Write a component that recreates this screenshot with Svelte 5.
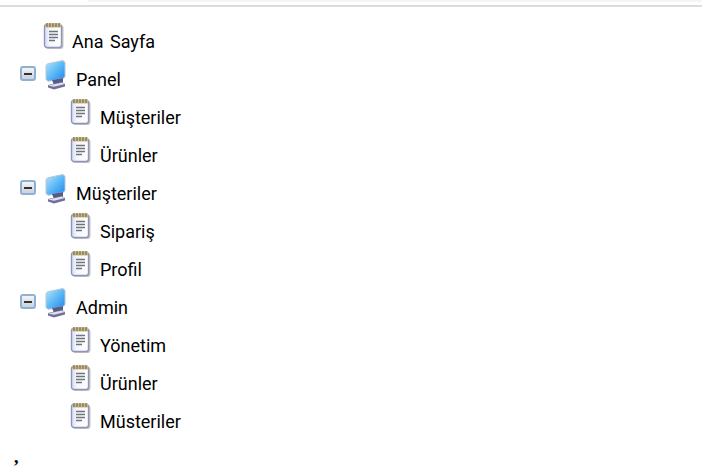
<script>
  const tree = [
    { label: "Ana Sayfa", type: "page" },
    {
      label: "Panel",
      type: "folder",
      children: ["Müşteriler", "Ürünler"]
    },
    {
      label: "Müşteriler",
      type: "folder",
      children: ["Sipariş", "Profil"]
    },
    {
      label: "Admin",
      type: "folder",
      children: ["Yönetim", "Ürünler", "Müsteriler"]
    }
  ];
</script>

{#snippet pageIcon()}
  <svg class="icon page" width="22" height="28" viewBox="0 0 22 28">
    <defs>
      <linearGradient id="pg" x1="0" x2="1" y1="0" y2="0">
        <stop offset="0" stop-color="#d3dbf2" />
        <stop offset="0.3" stop-color="#f6f7fb" />
        <stop offset="1" stop-color="#ffffff" />
      </linearGradient>
    </defs>
    <rect x="2.500" y="3" width="18" height="24" rx="3" fill="#c4c4c0" />
    <rect x="1.500" y="2.500" width="17" height="23" rx="2.500" fill="url(#pg)" stroke="#8d95bd" stroke-width="1.400" />
    <rect x="2.500" y="1.500" width="15.500" height="4" fill="#c6b98c" />
    <path d="M4 1v4M7 1v4M10 1v4M13 1v4M16 1v4" stroke="#857548" stroke-width="1.300" />
    <path d="M6 9.500h9M6 12.500h9M6 15.500h9M6 18.500h6" stroke="#6f737c" stroke-width="1.500" />
  </svg>
{/snippet}

{#snippet folderIcon()}
  <svg class="icon pc" width="24" height="30" viewBox="0 0 24 30">
    <defs>
      <linearGradient id="sc" x1="0" x2="1" y1="0" y2="1">
        <stop offset="0" stop-color="#b4e6fc" />
        <stop offset="0.55" stop-color="#55b4f5" />
        <stop offset="1" stop-color="#1f86e8" />
      </linearGradient>
    </defs>
    <path d="M2 6c0-1 1-2 2-2.300l14-3c1.500-.2 3 .8 3 2.300v13c0 1-1 2-2 2.200l-14 3c-1.500 0-3-1-3-2.500z" fill="url(#sc)" stroke="#b4c6dc" />
    <path d="M19 18v5l-9 2-2-5z" fill="#565c8a" />
    <path d="M4 25l14-3 3 2v2.500l-11 3-6-2z" fill="#726f9c" />
    <path d="M4 25.500l14-3 3 1.500-11 2.800z" fill="#e0e0ea" />
  </svg>
{/snippet}

{#snippet toggle()}
  <span class="toggle"><span class="minus"></span></span>
{/snippet}

<div class="page-wrap">
  <div class="strip"></div>
  <hr />
  <ul class="tree">
    {#each tree as node}
      {#if node.type === "page"}
        <li class="row root-page">
          {@render pageIcon()}
          <span class="label">{node.label}</span>
        </li>
      {:else}
        <li class="row folder">
          {@render toggle()}
          {@render folderIcon()}
          <span class="label">{node.label}</span>
        </li>
        {#each node.children as child}
          <li class="row child">
            {@render pageIcon()}
            <span class="label">{child}</span>
          </li>
        {/each}
      {/if}
    {/each}
  </ul>
  <p class="comma">,</p>
</div>

<style>
  :global(body) {
    margin: 0;
    background: #fff;
  }

  .page-wrap {
    width: 702px;
    height: 470px;
    overflow: hidden;
  }

  .strip {
    height: 2px;
    margin-left: 87px;
    background: #f5f5f5;
    border-bottom-left-radius: 3px;
  }

  hr {
    height: 0;
    margin: 3px 0 0;
    border: 0;
    border-top: 2px solid #dcdcdc;
  }

  .tree {
    list-style: none;
    margin: 15px 0 0;
    padding: 0;
    font-family: "Roboto", sans-serif;
    font-size: 18px;
    word-spacing: 2px;
    color: #000;
  }

  .row {
    display: flex;
    align-items: flex-start;
    height: 38px;
  }

  .root-page {
    padding-left: 43px;
  }

  .folder {
    padding-left: 20px;
  }

  .child {
    padding-left: 70px;
  }

  .label {
    line-height: 24px;
    margin-top: 8px;
    margin-left: 7px;
    white-space: nowrap;
  }

  .child .label {
    margin-left: 8px;
  }

  .folder .label {
    margin-left: 8px;
  }

  .icon {
    flex: none;
    filter: blur(0.5px);
  }

  .toggle {
    flex: none;
    box-sizing: border-box;
    width: 16px;
    height: 15px;
    margin-top: 6px;
    margin-right: 8px;
    display: flex;
    align-items: center;
    justify-content: center;
    border: 2px solid #8fb0d2;
    border-radius: 3px;
    background: linear-gradient(#f4f4f4, #c9d2dc);
    filter: blur(0.4px);
  }

  .minus {
    width: 8px;
    height: 2px;
    background: #333;
  }

  .comma {
    margin: 7px 0 0 14px;
    font-family: "Liberation Serif", serif;
    font-weight: bold;
    font-size: 18px;
    line-height: 20px;
  }
</style>
